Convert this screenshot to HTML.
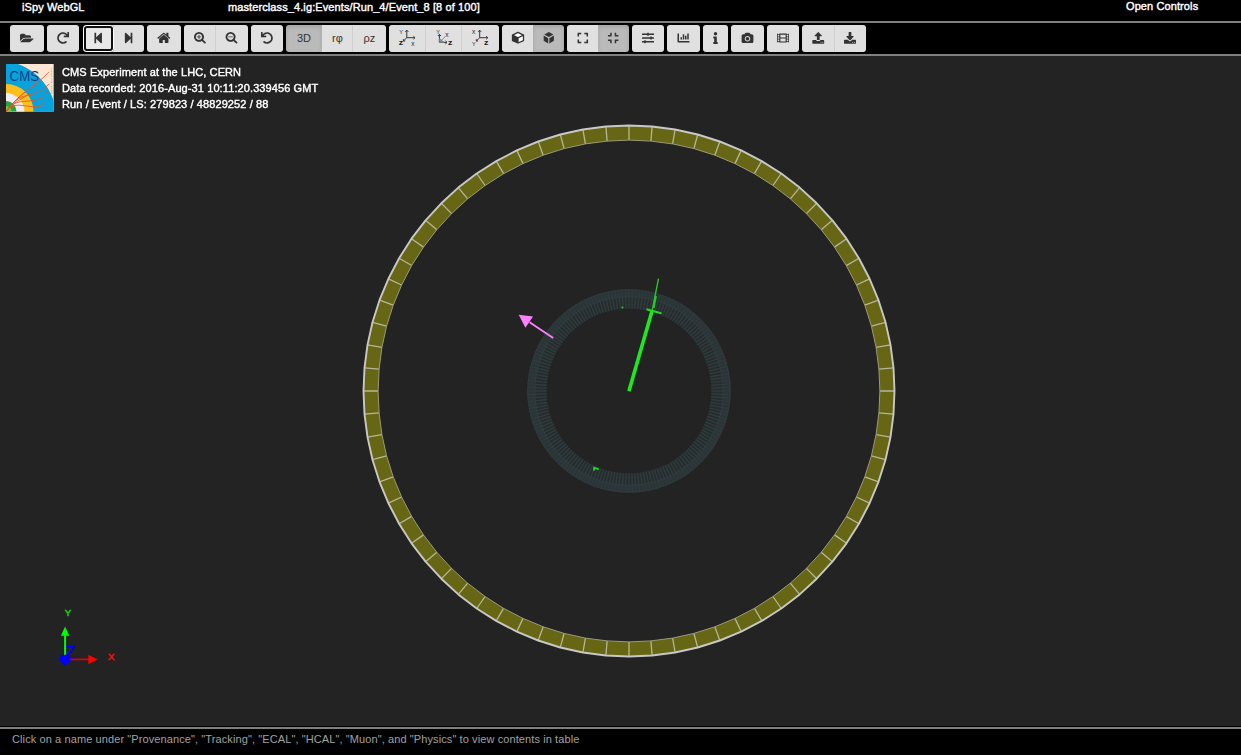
<!DOCTYPE html>
<html lang="en">
<head>
<meta charset="utf-8">
<title>iSpy WebGL</title>
<style>
html,body{margin:0;padding:0;background:#232323;overflow:hidden;}
body{width:1241px;height:755px;position:relative;font-family:"Liberation Sans",Arial,sans-serif;font-size:11px;color:#fff;letter-spacing:0.1px;-webkit-text-stroke:0.4px currentColor;}
#titlebar{position:absolute;left:0;top:0;width:1241px;height:21px;background:#000;}
#titlebar span{position:absolute;top:1px;line-height:13px;white-space:nowrap;}
#line1{position:absolute;left:0;top:21px;width:1241px;height:2px;background:#808080;}
#toolbar{position:absolute;left:0;top:23px;width:1241px;height:31px;background:#000;}
#line2{position:absolute;left:0;top:54px;width:1241px;height:2px;background:#808080;}
.b{position:absolute;top:2px;height:27px;background:#e0e0e0;border-radius:3px;box-sizing:border-box;color:#333;}
.b.l{border-radius:3px 0 0 3px;}
.b.m{border-radius:0;}
.b.r{border-radius:0 3px 3px 0;}
.b.sep{border-left:1px solid #cfcfcf;}
.b.foc{background:#e8e8e8;border-radius:4px;box-shadow:inset 0 0 0 1px #fff,inset 0 0 0 3px #101010;}
.b.act{background:#bababa;box-shadow:inset 0 2px 4px rgba(0,0,0,.12);}
#icons{position:absolute;left:0;top:0;}
.b .t{position:absolute;left:0;right:0;top:0;line-height:26px;text-align:center;font-size:11px;color:#333;-webkit-text-stroke:0;letter-spacing:0;}
#info{will-change:transform;position:absolute;left:62px;top:64px;line-height:16px;font-size:11px;color:#fff;white-space:nowrap;}
#logo{position:absolute;left:6px;top:64px;width:48px;height:48px;}
#scene{position:absolute;left:0;top:56px;}
#line3{position:absolute;left:0;top:727px;width:1241px;height:2px;background:#808080;}
#footer{position:absolute;left:0;top:726px;width:1241px;height:29px;background:#000;color:#a0a0a0;-webkit-text-stroke:0;}
#footer span{position:absolute;left:12px;top:7px;line-height:13px;white-space:nowrap;}
</style>
</head>
<body>
<div id="titlebar">
<span style="left:22px">iSpy WebGL</span>
<span style="left:228px">masterclass_4.ig:Events/Run_4/Event_8 [8 of 100]</span>
<span style="left:1126px;top:0">Open Controls</span>
</div>
<div id="line1"></div>
<div id="toolbar">
<div class="b" style="left:10px;width:34px"></div>
<div class="b" style="left:47px;width:32px"></div>
<div class="b r" style="left:109px;width:35px"></div>
<div class="b l foc" style="left:83px;width:31px"></div>
<div class="b" style="left:147px;width:34px"></div>
<div class="b l" style="left:184px;width:32px"></div>
<div class="b r sep" style="left:215px;width:33px"></div>
<div class="b" style="left:251px;width:32px"></div>
<div class="b l act" style="left:286px;width:36px"><span class="t">3D</span></div>
<div class="b m" style="left:322px;width:31px"><span class="t">rφ</span></div>
<div class="b r sep" style="left:352px;width:34px"><span class="t">ρz</span></div>
<div class="b l" style="left:389px;width:37px"></div>
<div class="b m sep" style="left:425px;width:37px"></div>
<div class="b r sep" style="left:461px;width:38px"></div>
<div class="b l" style="left:502px;width:31px"></div>
<div class="b r act" style="left:533px;width:31px"></div>
<div class="b l" style="left:567px;width:31px"></div>
<div class="b r act" style="left:598px;width:31px"></div>
<div class="b" style="left:632px;width:32px"></div>
<div class="b" style="left:667px;width:33px"></div>
<div class="b" style="left:703px;width:25px"></div>
<div class="b" style="left:731px;width:33px"></div>
<div class="b" style="left:767px;width:32px"></div>
<div class="b l" style="left:802px;width:33px"></div>
<div class="b r sep" style="left:834px;width:32px"></div>
<svg id="icons" width="1241" height="31" viewBox="0 23 1241 31" fill="#333">
<path transform="matrix(0.007185 0 0 -0.006037 20.000 42.300)" d="M1879 584Q1879 553 1848 518L1512 122Q1469 71 1391.5 35.5Q1314 0 1248 0H160Q126 0 99.5 13.0Q73 26 73 56Q73 87 104 122L440 518Q483 569 560.5 604.5Q638 640 704 640H1792Q1826 640 1852.5 627.0Q1879 614 1879 584ZM1536 928V768H704Q610 768 507.0 720.5Q404 673 343 601L6 205L1 199Q1 203 0.5 211.5Q0 220 0 224V1184Q0 1276 66.0 1342.0Q132 1408 224 1408H544Q636 1408 702.0 1342.0Q768 1276 768 1184V1152H1312Q1404 1152 1470.0 1086.0Q1536 1020 1536 928Z"/>
<path transform="matrix(0.023438 0 0 0.023438 57.000 32)" d="M500.33 0h-47.41a12 12 0 0 0-12 12.57l4 82.76A247.42 247.42 0 0 0 256 8C119.34 8 7.9 119.53 8 256.19 8.1 393.07 119.1 504 256 504a247.1 247.1 0 0 0 166.18-63.91 12 12 0 0 0 .48-17.43l-34-34a12 12 0 0 0-16.38-.55A176 176 0 1 1 402.1 157.8l-101.53-4.87a12 12 0 0 0-12.57 12v47.41a12 12 0 0 0 12 12h200.33a12 12 0 0 0 12-12V12a12 12 0 0 0-12-12z"/>
<path transform="matrix(0.023438 0 0 0.023438 92.950 32)" d="M64 468V44c0-6.600 5.400-12 12-12h48c6.600 0 12 5.400 12 12v176.400l195.500-181C352.100 22.300 384 36.600 384 64v384c0 27.400-31.900 41.700-52.500 24.600L136 292.700V468c0 6.600-5.400 12-12 12H76c-6.600 0-12-5.400-12-12z"/>
<path transform="matrix(-0.023438 0 0 0.023438 133.850 32)" d="M64 468V44c0-6.600 5.400-12 12-12h48c6.600 0 12 5.400 12 12v176.400l195.500-181C352.100 22.300 384 36.600 384 64v384c0 27.400-31.900 41.700-52.500 24.600L136 292.700V468c0 6.600-5.400 12-12 12H76c-6.600 0-12-5.400-12-12z"/>
<path transform="matrix(0.008063 0 0 -0.007989 157.091 43.000)" d="M1408 544V64Q1408 38 1389.0 19.0Q1370 0 1344 0H960V384H704V0H320Q294 0 275.0 19.0Q256 38 256 64V544Q256 545 256.5 547.0Q257 549 257 550L832 1024L1407 550Q1408 548 1408 544ZM1631 613 1569 539Q1561 530 1548 528H1545Q1532 528 1524 535L832 1112L140 535Q128 527 116 528Q103 530 95 539L33 613Q25 623 26.0 636.5Q27 650 37 658L756 1257Q788 1283 832.0 1283.0Q876 1283 908 1257L1152 1053V1248Q1152 1262 1161.0 1271.0Q1170 1280 1184 1280H1376Q1390 1280 1399.0 1271.0Q1408 1262 1408 1248V840L1627 658Q1637 650 1638.0 636.5Q1639 623 1631 613Z"/>
<path transform="matrix(0.007091 0 0 -0.006971 194.000 41.815)" d="M1024 736V672Q1024 659 1014.5 649.5Q1005 640 992 640H768V416Q768 403 758.5 393.5Q749 384 736 384H672Q659 384 649.5 393.5Q640 403 640 416V640H416Q403 640 393.5 649.5Q384 659 384 672V736Q384 749 393.5 758.5Q403 768 416 768H640V992Q640 1005 649.5 1014.5Q659 1024 672 1024H736Q749 1024 758.5 1014.5Q768 1005 768 992V768H992Q1005 768 1014.5 758.5Q1024 749 1024 736ZM1020.5 387.5Q1152 519 1152.0 704.0Q1152 889 1020.5 1020.5Q889 1152 704.0 1152.0Q519 1152 387.5 1020.5Q256 889 256.0 704.0Q256 519 387.5 387.5Q519 256 704.0 256.0Q889 256 1020.5 387.5ZM1536 -256Q1482 -256 1446 -218L1103 124Q924 0 704 0Q561 0 430.5 55.5Q300 111 205.5 205.5Q111 300 55.5 430.5Q0 561 0.0 704.0Q0 847 55.5 977.5Q111 1108 205.5 1202.5Q300 1297 430.5 1352.5Q561 1408 704.0 1408.0Q847 1408 977.5 1352.5Q1108 1297 1202.5 1202.5Q1297 1108 1352.5 977.5Q1408 847 1408 704Q1408 484 1284 305L1627 -38Q1664 -75 1664.0 -128.0Q1664 -181 1626.5 -218.5Q1589 -256 1536 -256Z"/>
<path transform="matrix(0.007091 0 0 -0.006971 225.600 41.815)" d="M1024 736V672Q1024 659 1014.5 649.5Q1005 640 992 640H416Q403 640 393.5 649.5Q384 659 384 672V736Q384 749 393.5 758.5Q403 768 416 768H992Q1005 768 1014.5 758.5Q1024 749 1024 736ZM1020.5 387.5Q1152 519 1152.0 704.0Q1152 889 1020.5 1020.5Q889 1152 704.0 1152.0Q519 1152 387.5 1020.5Q256 889 256.0 704.0Q256 519 387.5 387.5Q519 256 704.0 256.0Q889 256 1020.5 387.5ZM1536 -256Q1482 -256 1446 -218L1103 124Q924 0 704 0Q561 0 430.5 55.5Q300 111 205.5 205.5Q111 300 55.5 430.5Q0 561 0.0 704.0Q0 847 55.5 977.5Q111 1108 205.5 1202.5Q300 1297 430.5 1352.5Q561 1408 704.0 1408.0Q847 1408 977.5 1352.5Q1108 1297 1202.5 1202.5Q1297 1108 1352.5 977.5Q1408 847 1408 704Q1408 484 1284 305L1627 -38Q1664 -75 1664.0 -128.0Q1664 -181 1626.5 -218.5Q1589 -256 1536 -256Z"/>
<path transform="matrix(-0.023438 0 0 0.023438 273.000 32)" d="M500.33 0h-47.41a12 12 0 0 0-12 12.57l4 82.76A247.42 247.42 0 0 0 256 8C119.34 8 7.9 119.53 8 256.19 8.1 393.07 119.1 504 256 504a247.1 247.1 0 0 0 166.18-63.91 12 12 0 0 0 .48-17.43l-34-34a12 12 0 0 0-16.38-.55A176 176 0 1 1 402.1 157.8l-101.53-4.87a12 12 0 0 0-12.57 12v47.41a12 12 0 0 0 12 12h200.33a12 12 0 0 0 12-12V12a12 12 0 0 0-12-12z"/>
<path transform="matrix(0.023438 0 0 0.023438 577.550 32)" d="M0 180V56c0-13.300 10.700-24 24-24h124c6.600 0 12 5.400 12 12v40c0 6.600-5.400 12-12 12H64v84c0 6.600-5.400 12-12 12H12c-6.600 0-12-5.400-12-12zM288 44v40c0 6.600 5.400 12 12 12h84v84c0 6.600 5.400 12 12 12h40c6.600 0 12-5.400 12-12V56c0-13.300-10.700-24-24-24H300c-6.600 0-12 5.400-12 12zm148 276h-40c-6.600 0-12 5.400-12 12v84h-84c-6.600 0-12 5.400-12 12v40c0 6.600 5.400 12 12 12h124c13.300 0 24-10.700 24-24V332c0-6.600-5.400-12-12-12zM160 468v-40c0-6.600-5.400-12-12-12H64v-84c0-6.600-5.400-12-12-12H12c-6.600 0-12 5.400-12 12v124c0 13.300 10.700 24 24 24h124c6.600 0 12-5.400 12-12z"/>
<path transform="matrix(0.023438 0 0 0.023438 607.950 32)" d="M436 192H312c-13.300 0-24-10.700-24-24V44c0-6.600 5.400-12 12-12h40c6.600 0 12 5.400 12 12v84h84c6.600 0 12 5.400 12 12v40c0 6.600-5.400 12-12 12zm-276-24V44c0-6.600-5.400-12-12-12h-40c-6.600 0-12 5.400-12 12v84H12c-6.600 0-12 5.400-12 12v40c0 6.600 5.400 12 12 12h124c13.300 0 24-10.700 24-24zm0 300V344c0-13.300-10.700-24-24-24H12c-6.600 0-12 5.400-12 12v40c0 6.600 5.400 12 12 12h84v84c0 6.600 5.400 12 12 12h40c6.600 0 12-5.400 12-12zm192 0v-84h84c6.600 0 12-5.400 12-12v-40c0-6.600-5.400-12-12-12H312c-13.300 0-24 10.700-24 24v124c0 6.600 5.400 12 12 12h40c6.600 0 12-5.400 12-12z"/>
<path transform="matrix(0.023438 0 0 0.023438 642.000 32)" d="M496 384H160v-16c0-8.800-7.200-16-16-16h-32c-8.800 0-16 7.200-16 16v16H16c-8.800 0-16 7.200-16 16v32c0 8.800 7.200 16 16 16h80v16c0 8.800 7.200 16 16 16h32c8.800 0 16-7.200 16-16v-16h336c8.800 0 16-7.200 16-16v-32c0-8.800-7.200-16-16-16zm0-160h-80v-16c0-8.800-7.200-16-16-16h-32c-8.800 0-16 7.200-16 16v16H16c-8.800 0-16 7.200-16 16v32c0 8.800 7.200 16 16 16h336v16c0 8.800 7.200 16 16 16h32c8.800 0 16-7.200 16-16v-16h80c8.800 0 16-7.200 16-16v-32c0-8.800-7.200-16-16-16zm0-160H288V48c0-8.800-7.200-16-16-16h-32c-8.800 0-16 7.200-16 16v16H16C7.200 64 0 71.200 0 80v32c0 8.800 7.200 16 16 16h208v16c0 8.800 7.200 16 16 16h32c8.800 0 16-7.200 16-16v-16h208c8.800 0 16-7.200 16-16V80c0-8.800-7.200-16-16-16z"/>
<path transform="matrix(0.023438 0 0 0.023438 677.500 32)" d="M332.8 320h38.4c6.400 0 12.800-6.400 12.800-12.800V172.800c0-6.400-6.400-12.800-12.800-12.800h-38.400c-6.400 0-12.800 6.400-12.800 12.800v134.400c0 6.400 6.400 12.800 12.800 12.800zm96 0h38.400c6.400 0 12.800-6.400 12.800-12.800V76.800c0-6.400-6.400-12.800-12.800-12.800h-38.400c-6.400 0-12.800 6.400-12.800 12.800v230.400c0 6.400 6.400 12.800 12.800 12.800zm-288 0h38.400c6.400 0 12.800-6.400 12.800-12.800v-70.400c0-6.400-6.400-12.800-12.800-12.800h-38.400c-6.400 0-12.800 6.400-12.800 12.800v70.400c0 6.400 6.400 12.800 12.800 12.800zm96 0h38.400c6.400 0 12.800-6.400 12.800-12.800V108.800c0-6.400-6.400-12.800-12.800-12.800h-38.400c-6.400 0-12.800 6.400-12.800 12.800v198.400c0 6.400 6.400 12.800 12.800 12.800zM496 384H64V80c0-8.840-7.160-16-16-16H16C7.160 64 0 71.160 0 80v336c0 17.670 14.330 32 32 32h464c8.840 0 16-7.160 16-16v-32c0-8.840-7.160-16-16-16z"/>
<path transform="matrix(0.023438 0 0 0.023438 713.250 32)" d="M20 424.229h20V279.771H20c-11.046 0-20-8.954-20-20V212c0-11.046 8.954-20 20-20h112c11.046 0 20 8.954 20 20v212.229h20c11.046 0 20 8.954 20 20V492c0 11.046-8.954 20-20 20H20c-11.046 0-20-8.954-20-20v-47.771c0-11.046 8.954-20 20-20zM96 0C56.235 0 24 32.235 24 72s32.235 72 72 72 72-32.235 72-72S135.764 0 96 0z"/>
<path transform="matrix(0.006146 0 0 -0.006220 741.600 42.304)" d="M756.5 779.5Q841 864 960.0 864.0Q1079 864 1163.5 779.5Q1248 695 1248.0 576.0Q1248 457 1163.5 372.5Q1079 288 960.0 288.0Q841 288 756.5 372.5Q672 457 672.0 576.0Q672 695 756.5 779.5ZM1664 1280Q1770 1280 1845.0 1205.0Q1920 1130 1920 1024V128Q1920 22 1845.0 -53.0Q1770 -128 1664 -128H256Q150 -128 75.0 -53.0Q0 22 0 128V1024Q0 1130 75.0 1205.0Q150 1280 256 1280H480L531 1416Q550 1465 600.5 1500.5Q651 1536 704 1536H1216Q1269 1536 1319.5 1500.5Q1370 1465 1389 1416L1440 1280ZM643.5 259.5Q775 128 960.0 128.0Q1145 128 1276.5 259.5Q1408 391 1408.0 576.0Q1408 761 1276.5 892.5Q1145 1024 960.0 1024.0Q775 1024 643.5 892.5Q512 761 512.0 576.0Q512 391 643.5 259.5Z"/>
<path transform="matrix(0.023438 0 0 0.023438 777.000 32)" d="M488 64h-8v20c0 6.600-5.400 12-12 12h-40c-6.600 0-12-5.400-12-12V64H96v20c0 6.600-5.400 12-12 12H44c-6.600 0-12-5.400-12-12V64h-8C10.700 64 0 74.700 0 88v336c0 13.300 10.700 24 24 24h8v-20c0-6.600 5.400-12 12-12h40c6.600 0 12 5.400 12 12v20h320v-20c0-6.600 5.400-12 12-12h40c6.600 0 12 5.400 12 12v20h8c13.300 0 24-10.700 24-24V88c0-13.300-10.700-24-24-24zM96 372c0 6.600-5.400 12-12 12H44c-6.600 0-12-5.400-12-12v-40c0-6.600 5.400-12 12-12h40c6.600 0 12 5.400 12 12v40zm0-96c0 6.600-5.400 12-12 12H44c-6.600 0-12-5.400-12-12v-40c0-6.600 5.400-12 12-12h40c6.600 0 12 5.400 12 12v40zm0-96c0 6.600-5.400 12-12 12H44c-6.600 0-12-5.400-12-12v-40c0-6.600 5.400-12 12-12h40c6.600 0 12 5.400 12 12v40zm272 208c0 6.600-5.400 12-12 12H156c-6.600 0-12-5.400-12-12v-96c0-6.600 5.400-12 12-12h200c6.600 0 12 5.400 12 12v96zm0-168c0 6.600-5.400 12-12 12H156c-6.600 0-12-5.400-12-12v-96c0-6.600 5.400-12 12-12h200c6.600 0 12 5.400 12 12v96zm112 152c0 6.600-5.400 12-12 12h-40c-6.600 0-12-5.400-12-12v-40c0-6.600 5.400-12 12-12h40c6.600 0 12 5.400 12 12v40zm0-96c0 6.600-5.400 12-12 12h-40c-6.600 0-12-5.400-12-12v-40c0-6.600 5.400-12 12-12h40c6.600 0 12 5.400 12 12v40zm0-96c0 6.600-5.400 12-12 12h-40c-6.600 0-12-5.400-12-12v-40c0-6.600 5.400-12 12-12h40c6.600 0 12 5.400 12 12v40z"/>
<path transform="matrix(0.007151 0 0 -0.007375 812.300 42.856)" d="M1261.0 19.0Q1280 38 1280.0 64.0Q1280 90 1261.0 109.0Q1242 128 1216.0 128.0Q1190 128 1171.0 109.0Q1152 90 1152.0 64.0Q1152 38 1171.0 19.0Q1190 0 1216.0 0.0Q1242 0 1261.0 19.0ZM1517.0 19.0Q1536 38 1536.0 64.0Q1536 90 1517.0 109.0Q1498 128 1472.0 128.0Q1446 128 1427.0 109.0Q1408 90 1408.0 64.0Q1408 38 1427.0 19.0Q1446 0 1472.0 0.0Q1498 0 1517.0 19.0ZM1664 288V-32Q1664 -72 1636.0 -100.0Q1608 -128 1568 -128H96Q56 -128 28.0 -100.0Q0 -72 0 -32V288Q0 328 28.0 356.0Q56 384 96 384H523Q544 328 593.5 292.0Q643 256 704 256H960Q1021 256 1070.5 292.0Q1120 328 1141 384H1568Q1608 384 1636.0 356.0Q1664 328 1664 288ZM1339 936Q1322 896 1280 896H1024V448Q1024 422 1005.0 403.0Q986 384 960 384H704Q678 384 659.0 403.0Q640 422 640 448V896H384Q342 896 325 936Q308 975 339 1005L787 1453Q805 1472 832.0 1472.0Q859 1472 877 1453L1325 1005Q1356 975 1339 936Z"/>
<path transform="matrix(0.007212 0 0 -0.007682 844.000 43.800)" d="M1261.0 147.0Q1280 166 1280.0 192.0Q1280 218 1261.0 237.0Q1242 256 1216.0 256.0Q1190 256 1171.0 237.0Q1152 218 1152.0 192.0Q1152 166 1171.0 147.0Q1190 128 1216.0 128.0Q1242 128 1261.0 147.0ZM1517.0 147.0Q1536 166 1536.0 192.0Q1536 218 1517.0 237.0Q1498 256 1472.0 256.0Q1446 256 1427.0 237.0Q1408 218 1408.0 192.0Q1408 166 1427.0 147.0Q1446 128 1472.0 128.0Q1498 128 1517.0 147.0ZM1664 416V96Q1664 56 1636.0 28.0Q1608 0 1568 0H96Q56 0 28.0 28.0Q0 56 0 96V416Q0 456 28.0 484.0Q56 512 96 512H561L696 376Q754 320 832.0 320.0Q910 320 968 376L1104 512H1568Q1608 512 1636.0 484.0Q1664 456 1664 416ZM1339 985Q1356 944 1325 915L877 467Q859 448 832.0 448.0Q805 448 787 467L339 915Q308 944 325 985Q342 1024 384 1024H640V1472Q640 1498 659.0 1517.0Q678 1536 704 1536H960Q986 1536 1005.0 1517.0Q1024 1498 1024 1472V1024H1280Q1322 1024 1339 985Z"/>
<path d="M518.0 32.4L523.5 35.1L523.5 40.6L518.0 43L512.5 40.6L512.5 35.1Z" fill="#fff" stroke="#333" stroke-width="1.3" stroke-linejoin="round"/>
<path d="M512.5 35.1L518.0 37.8L518.0 43L512.5 40.6Z" fill="#333"/>
<path d="M512.5 35.1L518.0 37.8L523.5 35.1M518.0 37.8L518.0 43" fill="none" stroke="#333" stroke-width="1.2"/>
<path d="M548.8 31.9L553.3 34.5L548.8 37.1L544.3 34.5Z"/>
<path d="M543.6999999999999 35.6L548.1999999999999 38.2L548.1999999999999 43.4L543.6999999999999 40.8Z"/>
<path d="M553.9 35.6L549.4 38.2L549.4 43.4L553.9 40.8Z"/>
<path d="M406.8 37.7L406.8 30.2M405.3 31.8L406.8 30.2L408.3 31.8M406.8 37.7L415 37.7M413.4 36.2L415 37.7L413.4 39.2M406.8 37.7L403.4 41M403.4 39.2L403.4 41L405.2 41" fill="none" stroke="#333" stroke-width="1"/>
<text x="401.1" y="33.8" text-anchor="middle" font-family="Liberation Sans, sans-serif" font-size="5.5" fill="#2a2a2a">Y</text>
<text transform="translate(401.1 45.4) scale(1.35 1)" text-anchor="middle" font-family="Liberation Sans, sans-serif" font-size="6.5" font-weight="bold" fill="#222">z</text>
<text x="413" y="45.5" text-anchor="middle" font-family="Liberation Sans, sans-serif" font-size="6.5" fill="#2a2a2a">x</text>
<path d="M439.4 34.4L439.4 42.4L447 42.4M437.9 36L439.4 34.4L440.9 36M445.4 40.9L447 42.4L445.4 43.9" fill="none" stroke="#333" stroke-width="1"/>
<path d="M439.4 42.4L445 36.8M439.4 38.5L444 42.4L439.4 42.4Z" fill="#999" stroke="#777" stroke-width="0.8"/>
<text x="438.1" y="33.8" text-anchor="middle" font-family="Liberation Sans, sans-serif" font-size="5.5" fill="#2a2a2a">Y</text>
<text x="447" y="36.8" text-anchor="middle" font-family="Liberation Sans, sans-serif" font-size="6.5" fill="#2a2a2a">x</text>
<text transform="translate(450.3 45.4) scale(1.35 1)" text-anchor="middle" font-family="Liberation Sans, sans-serif" font-size="6.5" font-weight="bold" fill="#222">z</text>
<path d="M479.7 37.7L479.7 30.2M478.2 31.8L479.7 30.2L481.2 31.8M479.7 37.7L487.8 37.7M486.2 36.2L487.8 37.7L486.2 39.2M479.7 37.7L476.3 41M476.3 39.2L476.3 41L478.1 41" fill="none" stroke="#333" stroke-width="1"/>
<text x="473.8" y="33.8" text-anchor="middle" font-family="Liberation Sans, sans-serif" font-size="6.5" fill="#2a2a2a">x</text>
<text x="473.8" y="45.8" text-anchor="middle" font-family="Liberation Sans, sans-serif" font-size="5.5" fill="#2a2a2a">Y</text>
<text transform="translate(486.2 45.4) scale(1.35 1)" text-anchor="middle" font-family="Liberation Sans, sans-serif" font-size="6.5" font-weight="bold" fill="#222">z</text>
</svg>
</div>
<div id="line2"></div>
<svg id="scene" width="1241" height="671" viewBox="0 56 1241 671">
<path d="M629 125.5 L605.9 126.5 L582.9 129.5 L560.3 134.5 L538.2 141.5 L516.8 150.4 L496.3 161.1 L476.7 173.5 L458.3 187.6 L441.3 203.3 L425.6 220.3 L411.5 238.7 L399.1 258.2 L388.4 278.8 L379.5 300.2 L372.5 322.3 L367.5 344.9 L364.5 367.9 L363.5 391 L364.5 414.1 L367.5 437.1 L372.5 459.7 L379.5 481.8 L388.4 503.2 L399.1 523.7 L411.5 543.3 L425.6 561.7 L441.3 578.7 L458.3 594.4 L476.7 608.5 L496.2 620.9 L516.8 631.6 L538.2 640.5 L560.3 647.5 L582.9 652.5 L605.9 655.5 L629 656.5 L652.1 655.5 L675.1 652.5 L697.7 647.5 L719.8 640.5 L741.2 631.6 L761.8 620.9 L781.3 608.5 L799.7 594.4 L816.7 578.7 L832.4 561.7 L846.5 543.3 L858.9 523.8 L869.6 503.2 L878.5 481.8 L885.5 459.7 L890.5 437.1 L893.5 414.1 L894.5 391 L893.5 367.9 L890.5 344.9 L885.5 322.3 L878.5 300.2 L869.6 278.8 L858.9 258.3 L846.5 238.7 L832.4 220.3 L816.7 203.3 L799.7 187.6 L781.3 173.5 L761.7 161.1 L741.2 150.4 L719.8 141.5 L697.7 134.5 L675.1 129.5 L652.1 126.5Z M629 140.1 L607.1 141.1 L585.4 143.9 L564.1 148.6 L543.2 155.2 L523 163.6 L503.6 173.7 L485.1 185.5 L467.7 198.8 L451.6 213.6 L436.8 229.7 L423.5 247.1 L411.7 265.5 L401.6 285 L393.2 305.2 L386.6 326.1 L381.9 347.4 L379.1 369.1 L378.1 391 L379.1 412.9 L381.9 434.6 L386.6 455.9 L393.2 476.8 L401.6 497 L411.7 516.4 L423.5 534.9 L436.8 552.3 L451.6 568.4 L467.7 583.2 L485.1 596.5 L503.5 608.3 L523 618.4 L543.2 626.8 L564.1 633.4 L585.4 638.1 L607.1 640.9 L629 641.9 L650.9 640.9 L672.6 638.1 L693.9 633.4 L714.8 626.8 L735 618.4 L754.5 608.3 L772.9 596.5 L790.3 583.2 L806.4 568.4 L821.2 552.3 L834.5 534.9 L846.3 516.5 L856.4 497 L864.8 476.8 L871.4 455.9 L876.1 434.6 L878.9 412.9 L879.9 391 L878.9 369.1 L876.1 347.4 L871.4 326.1 L864.8 305.2 L856.4 285 L846.3 265.6 L834.5 247.1 L821.2 229.7 L806.4 213.6 L790.3 198.8 L772.9 185.5 L754.4 173.7 L735 163.6 L714.8 155.2 L693.9 148.6 L672.6 143.9 L650.9 141.1Z" fill="#666614" fill-rule="evenodd"/>
<path d="M629 140.1L629 125.5M607.1 141.1L605.9 126.5M585.4 143.9L582.9 129.5M564.1 148.6L560.3 134.5M543.2 155.2L538.2 141.5M523 163.6L516.8 150.4M503.6 173.7L496.3 161.1M485.1 185.5L476.7 173.5M467.7 198.8L458.3 187.6M451.6 213.6L441.3 203.3M436.8 229.7L425.6 220.3M423.5 247.1L411.5 238.7M411.7 265.5L399.1 258.2M401.6 285L388.4 278.8M393.2 305.2L379.5 300.2M386.6 326.1L372.5 322.3M381.9 347.4L367.5 344.9M379.1 369.1L364.5 367.9M378.1 391L363.5 391M379.1 412.9L364.5 414.1M381.9 434.6L367.5 437.1M386.6 455.9L372.5 459.7M393.2 476.8L379.5 481.8M401.6 497L388.4 503.2M411.7 516.4L399.1 523.7M423.5 534.9L411.5 543.3M436.8 552.3L425.6 561.7M451.6 568.4L441.3 578.7M467.7 583.2L458.3 594.4M485.1 596.5L476.7 608.5M503.5 608.3L496.2 620.9M523 618.4L516.8 631.6M543.2 626.8L538.2 640.5M564.1 633.4L560.3 647.5M585.4 638.1L582.9 652.5M607.1 640.9L605.9 655.5M629 641.9L629 656.5M650.9 640.9L652.1 655.5M672.6 638.1L675.1 652.5M693.9 633.4L697.7 647.5M714.8 626.8L719.8 640.5M735 618.4L741.2 631.6M754.5 608.3L761.8 620.9M772.9 596.5L781.3 608.5M790.3 583.2L799.7 594.4M806.4 568.4L816.7 578.7M821.2 552.3L832.4 561.7M834.5 534.9L846.5 543.3M846.3 516.5L858.9 523.8M856.4 497L869.6 503.2M864.8 476.8L878.5 481.8M871.4 455.9L885.5 459.7M876.1 434.6L890.5 437.1M878.9 412.9L893.5 414.1M879.9 391L894.5 391M878.9 369.1L893.5 367.9M876.1 347.4L890.5 344.9M871.4 326.1L885.5 322.3M864.8 305.2L878.5 300.2M856.4 285L869.6 278.8M846.3 265.6L858.9 258.3M834.5 247.1L846.5 238.7M821.2 229.7L832.4 220.3M806.4 213.6L816.7 203.3M790.3 198.8L799.7 187.6M772.9 185.5L781.3 173.5M754.4 173.7L761.7 161.1M735 163.6L741.2 150.4M714.8 155.2L719.8 141.5M693.9 148.6L697.7 134.5M672.6 143.9L675.1 129.5M650.9 141.1L652.1 126.5" stroke="#b6b69a" stroke-width="1.3" fill="none"/>
<path d="M629 140.1 L607.1 141.1 L585.4 143.9 L564.1 148.6 L543.2 155.2 L523 163.6 L503.6 173.7 L485.1 185.5 L467.7 198.8 L451.6 213.6 L436.8 229.7 L423.5 247.1 L411.7 265.5 L401.6 285 L393.2 305.2 L386.6 326.1 L381.9 347.4 L379.1 369.1 L378.1 391 L379.1 412.9 L381.9 434.6 L386.6 455.9 L393.2 476.8 L401.6 497 L411.7 516.4 L423.5 534.9 L436.8 552.3 L451.6 568.4 L467.7 583.2 L485.1 596.5 L503.5 608.3 L523 618.4 L543.2 626.8 L564.1 633.4 L585.4 638.1 L607.1 640.9 L629 641.9 L650.9 640.9 L672.6 638.1 L693.9 633.4 L714.8 626.8 L735 618.4 L754.5 608.3 L772.9 596.5 L790.3 583.2 L806.4 568.4 L821.2 552.3 L834.5 534.9 L846.3 516.5 L856.4 497 L864.8 476.8 L871.4 455.9 L876.1 434.6 L878.9 412.9 L879.9 391 L878.9 369.1 L876.1 347.4 L871.4 326.1 L864.8 305.2 L856.4 285 L846.3 265.6 L834.5 247.1 L821.2 229.7 L806.4 213.6 L790.3 198.8 L772.9 185.5 L754.4 173.7 L735 163.6 L714.8 155.2 L693.9 148.6 L672.6 143.9 L650.9 141.1Z" stroke="#9a9a78" stroke-width="1" fill="none"/>
<path d="M629 125.5 L605.9 126.5 L582.9 129.5 L560.3 134.5 L538.2 141.5 L516.8 150.4 L496.3 161.1 L476.7 173.5 L458.3 187.6 L441.3 203.3 L425.6 220.3 L411.5 238.7 L399.1 258.2 L388.4 278.8 L379.5 300.2 L372.5 322.3 L367.5 344.9 L364.5 367.9 L363.5 391 L364.5 414.1 L367.5 437.1 L372.5 459.7 L379.5 481.8 L388.4 503.2 L399.1 523.7 L411.5 543.3 L425.6 561.7 L441.3 578.7 L458.3 594.4 L476.7 608.5 L496.2 620.9 L516.8 631.6 L538.2 640.5 L560.3 647.5 L582.9 652.5 L605.9 655.5 L629 656.5 L652.1 655.5 L675.1 652.5 L697.7 647.5 L719.8 640.5 L741.2 631.6 L761.8 620.9 L781.3 608.5 L799.7 594.4 L816.7 578.7 L832.4 561.7 L846.5 543.3 L858.9 523.8 L869.6 503.2 L878.5 481.8 L885.5 459.7 L890.5 437.1 L893.5 414.1 L894.5 391 L893.5 367.9 L890.5 344.9 L885.5 322.3 L878.5 300.2 L869.6 278.8 L858.9 258.3 L846.5 238.7 L832.4 220.3 L816.7 203.3 L799.7 187.6 L781.3 173.5 L761.7 161.1 L741.2 150.4 L719.8 141.5 L697.7 134.5 L675.1 129.5 L652.1 126.5Z" stroke="#c8c8c6" stroke-width="1.9" fill="none" stroke-linejoin="round"/>
<circle cx="629" cy="391" r="88.3" fill="none" stroke="#262c2d" stroke-width="11.9"/>
<circle cx="629" cy="391" r="98" fill="none" stroke="#2b3437" stroke-width="7.4"/>
<path d="M711.4 391L723.3 391M711.3 388.1L723.2 387.7M711.2 385.3L723.1 384.4M710.9 382.4L722.8 381.1M710.6 379.5L722.4 377.9M710.1 376.7L721.9 374.6M709.6 373.9L721.2 371.4M709 371.1L720.5 368.2M708.2 368.3L719.6 365M707.4 365.5L718.7 361.9M706.4 362.8L717.6 358.7M705.4 360.1L716.4 355.7M704.3 357.5L715.1 352.6M703.1 354.9L713.8 349.7M701.8 352.3L712.3 346.7M700.4 349.8L710.7 343.9M698.9 347.3L709 341M697.3 344.9L707.2 338.3M695.7 342.6L705.3 335.6M693.9 340.3L703.3 332.9M692.1 338L701.2 330.4M690.2 335.9L699.1 327.9M688.3 333.8L696.8 325.5M686.2 331.7L694.5 323.2M684.1 329.8L692.1 320.9M682 327.9L689.6 318.8M679.7 326.1L687.1 316.7M677.4 324.3L684.4 314.7M675.1 322.7L681.7 312.8M672.7 321.1L679 311M670.2 319.6L676.1 309.3M667.7 318.2L673.3 307.7M665.1 316.9L670.3 306.2M662.5 315.7L667.4 304.9M659.9 314.6L664.3 303.6M657.2 313.6L661.3 302.4M654.5 312.6L658.1 301.3M651.7 311.8L655 300.4M648.9 311L651.8 299.5M646.1 310.4L648.6 298.8M643.3 309.9L645.4 298.1M640.5 309.4L642.1 297.6M637.6 309.1L638.9 297.2M634.7 308.8L635.6 296.9M631.9 308.7L632.3 296.8M629 308.6L629 296.7M626.1 308.7L625.7 296.8M623.3 308.8L622.4 296.9M620.4 309.1L619.1 297.2M617.5 309.4L615.9 297.6M614.7 309.9L612.6 298.1M611.9 310.4L609.4 298.8M609.1 311L606.2 299.5M606.3 311.8L603 300.4M603.5 312.6L599.9 301.3M600.8 313.6L596.7 302.4M598.1 314.6L593.7 303.6M595.5 315.7L590.6 304.9M592.9 316.9L587.7 306.2M590.3 318.2L584.7 307.7M587.8 319.6L581.9 309.3M585.3 321.1L579 311M582.9 322.7L576.3 312.8M580.6 324.3L573.6 314.7M578.3 326.1L570.9 316.7M576 327.9L568.4 318.8M573.9 329.8L565.9 320.9M571.8 331.7L563.5 323.2M569.7 333.8L561.2 325.5M567.8 335.9L558.9 327.9M565.9 338L556.8 330.4M564.1 340.3L554.7 332.9M562.3 342.6L552.7 335.6M560.7 344.9L550.8 338.3M559.1 347.3L549 341M557.6 349.8L547.3 343.9M556.2 352.3L545.7 346.7M554.9 354.9L544.2 349.7M553.7 357.5L542.9 352.6M552.6 360.1L541.6 355.7M551.6 362.8L540.4 358.7M550.6 365.5L539.3 361.9M549.8 368.3L538.4 365M549 371.1L537.5 368.2M548.4 373.9L536.8 371.4M547.9 376.7L536.1 374.6M547.4 379.5L535.6 377.9M547.1 382.4L535.2 381.1M546.8 385.3L534.9 384.4M546.7 388.1L534.8 387.7M546.6 391L534.7 391M546.7 393.9L534.8 394.3M546.8 396.7L534.9 397.6M547.1 399.6L535.2 400.9M547.4 402.5L535.6 404.1M547.9 405.3L536.1 407.4M548.4 408.1L536.8 410.6M549 410.9L537.5 413.8M549.8 413.7L538.4 417M550.6 416.5L539.3 420.1M551.6 419.2L540.4 423.3M552.6 421.9L541.6 426.3M553.7 424.5L542.9 429.4M554.9 427.1L544.2 432.3M556.2 429.7L545.7 435.3M557.6 432.2L547.3 438.1M559.1 434.7L549 441M560.7 437.1L550.8 443.7M562.3 439.4L552.7 446.4M564.1 441.7L554.7 449.1M565.9 444L556.8 451.6M567.8 446.1L558.9 454.1M569.7 448.2L561.2 456.5M571.8 450.3L563.5 458.8M573.9 452.2L565.9 461.1M576 454.1L568.4 463.2M578.3 455.9L570.9 465.3M580.6 457.7L573.6 467.3M582.9 459.3L576.3 469.2M585.3 460.9L579 471M587.8 462.4L581.8 472.7M590.3 463.8L584.7 474.3M592.9 465.1L587.7 475.8M595.5 466.3L590.6 477.1M598.1 467.4L593.7 478.4M600.8 468.4L596.7 479.6M603.5 469.4L599.9 480.7M606.3 470.2L603 481.6M609.1 471L606.2 482.5M611.9 471.6L609.4 483.2M614.7 472.1L612.6 483.9M617.5 472.6L615.9 484.4M620.4 472.9L619.1 484.8M623.3 473.2L622.4 485.1M626.1 473.3L625.7 485.2M629 473.4L629 485.3M631.9 473.3L632.3 485.2M634.7 473.2L635.6 485.1M637.6 472.9L638.9 484.8M640.5 472.6L642.1 484.4M643.3 472.1L645.4 483.9M646.1 471.6L648.6 483.2M648.9 471L651.8 482.5M651.7 470.2L655 481.6M654.5 469.4L658.1 480.7M657.2 468.4L661.3 479.6M659.9 467.4L664.3 478.4M662.5 466.3L667.4 477.1M665.1 465.1L670.3 475.8M667.7 463.8L673.3 474.3M670.2 462.4L676.1 472.7M672.7 460.9L679 471M675.1 459.3L681.7 469.2M677.4 457.7L684.4 467.3M679.7 455.9L687.1 465.3M682 454.1L689.6 463.2M684.1 452.2L692.1 461.1M686.2 450.3L694.5 458.8M688.3 448.2L696.8 456.5M690.2 446.1L699.1 454.1M692.1 444L701.2 451.6M693.9 441.7L703.3 449.1M695.7 439.4L705.3 446.4M697.3 437.1L707.2 443.7M698.9 434.7L709 441M700.4 432.2L710.7 438.2M701.8 429.7L712.3 435.3M703.1 427.1L713.8 432.3M704.3 424.5L715.1 429.4M705.4 421.9L716.4 426.3M706.4 419.2L717.6 423.3M707.4 416.5L718.7 420.1M708.2 413.7L719.6 417M709 410.9L720.5 413.8M709.6 408.1L721.2 410.6M710.1 405.3L721.9 407.4M710.6 402.5L722.4 404.1M710.9 399.6L722.8 400.9M711.2 396.7L723.1 397.6M711.3 393.9L723.2 394.3" stroke="#303b3e" stroke-width="1.4" fill="none"/>
<path d="M723.3 391L730.7 391M723.2 387.7L730.6 387.5M723.1 384.4L730.5 383.9M722.8 381.1L730.1 380.4M722.4 377.9L729.7 376.8M721.9 374.6L729.2 373.3M721.2 371.4L728.5 369.9M720.5 368.2L727.7 366.4M719.6 365L726.8 363M718.7 361.9L725.7 359.6M717.6 358.7L724.6 356.2M716.4 355.7L723.3 352.9M715.1 352.6L721.9 349.6M713.8 349.7L720.4 346.4M712.3 346.7L718.8 343.3M710.7 343.9L717.1 340.1M709 341L715.2 337.1M707.2 338.3L713.3 334.1M705.3 335.6L711.3 331.2M703.3 332.9L709.1 328.4M701.2 330.4L706.9 325.6M699.1 327.9L704.6 322.9M696.8 325.5L702.2 320.4M694.5 323.2L699.6 317.8M692.1 320.9L697.1 315.4M689.6 318.8L694.4 313.1M687.1 316.7L691.6 310.9M684.4 314.7L688.8 308.7M681.7 312.8L685.9 306.7M679 311L682.9 304.8M676.1 309.3L679.9 302.9M673.3 307.7L676.7 301.2M670.3 306.2L673.6 299.6M667.4 304.9L670.4 298.1M664.3 303.6L667.1 296.7M661.3 302.4L663.8 295.4M658.1 301.3L660.4 294.3M655 300.4L657 293.2M651.8 299.5L653.6 292.3M648.6 298.8L650.1 291.5M645.4 298.1L646.7 290.8M642.1 297.6L643.2 290.3M638.9 297.2L639.6 289.9M635.6 296.9L636.1 289.5M632.3 296.8L632.5 289.4M629 296.7L629 289.3M625.7 296.8L625.5 289.4M622.4 296.9L621.9 289.5M619.1 297.2L618.4 289.9M615.9 297.6L614.8 290.3M612.6 298.1L611.3 290.8M609.4 298.8L607.9 291.5M606.2 299.5L604.4 292.3M603 300.4L601 293.2M599.9 301.3L597.6 294.3M596.7 302.4L594.2 295.4M593.7 303.6L590.9 296.7M590.6 304.9L587.6 298.1M587.7 306.2L584.4 299.6M584.7 307.7L581.3 301.2M581.9 309.3L578.1 302.9M579 311L575.1 304.8M576.3 312.8L572.1 306.7M573.6 314.7L569.2 308.7M570.9 316.7L566.4 310.9M568.4 318.8L563.6 313.1M565.9 320.9L560.9 315.4M563.5 323.2L558.4 317.8M561.2 325.5L555.8 320.4M558.9 327.9L553.4 322.9M556.8 330.4L551.1 325.6M554.7 332.9L548.9 328.4M552.7 335.6L546.7 331.2M550.8 338.3L544.7 334.1M549 341L542.8 337.1M547.3 343.9L540.9 340.1M545.7 346.7L539.2 343.3M544.2 349.7L537.6 346.4M542.9 352.6L536.1 349.6M541.6 355.7L534.7 352.9M540.4 358.7L533.4 356.2M539.3 361.9L532.3 359.6M538.4 365L531.2 363M537.5 368.2L530.3 366.4M536.8 371.4L529.5 369.9M536.1 374.6L528.8 373.3M535.6 377.9L528.3 376.8M535.2 381.1L527.9 380.4M534.9 384.4L527.5 383.9M534.8 387.7L527.4 387.5M534.7 391L527.3 391M534.8 394.3L527.4 394.5M534.9 397.6L527.5 398.1M535.2 400.9L527.9 401.6M535.6 404.1L528.3 405.2M536.1 407.4L528.8 408.7M536.8 410.6L529.5 412.1M537.5 413.8L530.3 415.6M538.4 417L531.2 419M539.3 420.1L532.3 422.4M540.4 423.3L533.4 425.8M541.6 426.3L534.7 429.1M542.9 429.4L536.1 432.4M544.2 432.3L537.6 435.6M545.7 435.3L539.2 438.7M547.3 438.1L540.9 441.9M549 441L542.8 444.9M550.8 443.7L544.7 447.9M552.7 446.4L546.7 450.8M554.7 449.1L548.9 453.6M556.8 451.6L551.1 456.4M558.9 454.1L553.4 459.1M561.2 456.5L555.8 461.6M563.5 458.8L558.4 464.2M565.9 461.1L560.9 466.6M568.4 463.2L563.6 468.9M570.9 465.3L566.4 471.1M573.6 467.3L569.2 473.3M576.3 469.2L572.1 475.3M579 471L575.1 477.2M581.8 472.7L578.1 479.1M584.7 474.3L581.3 480.8M587.7 475.8L584.4 482.4M590.6 477.1L587.6 483.9M593.7 478.4L590.9 485.3M596.7 479.6L594.2 486.6M599.9 480.7L597.6 487.7M603 481.6L601 488.8M606.2 482.5L604.4 489.7M609.4 483.2L607.9 490.5M612.6 483.9L611.3 491.2M615.9 484.4L614.8 491.7M619.1 484.8L618.4 492.1M622.4 485.1L621.9 492.5M625.7 485.2L625.5 492.6M629 485.3L629 492.7M632.3 485.2L632.5 492.6M635.6 485.1L636.1 492.5M638.9 484.8L639.6 492.1M642.1 484.4L643.2 491.7M645.4 483.9L646.7 491.2M648.6 483.2L650.1 490.5M651.8 482.5L653.6 489.7M655 481.6L657 488.8M658.1 480.7L660.4 487.7M661.3 479.6L663.8 486.6M664.3 478.4L667.1 485.3M667.4 477.1L670.4 483.9M670.3 475.8L673.6 482.4M673.3 474.3L676.7 480.8M676.1 472.7L679.9 479.1M679 471L682.9 477.2M681.7 469.2L685.9 475.3M684.4 467.3L688.8 473.3M687.1 465.3L691.6 471.1M689.6 463.2L694.4 468.9M692.1 461.1L697.1 466.6M694.5 458.8L699.6 464.2M696.8 456.5L702.2 461.6M699.1 454.1L704.6 459.1M701.2 451.6L706.9 456.4M703.3 449.1L709.1 453.6M705.3 446.4L711.3 450.8M707.2 443.7L713.3 447.9M709 441L715.2 444.9M710.7 438.2L717.1 441.9M712.3 435.3L718.8 438.7M713.8 432.3L720.4 435.6M715.1 429.4L721.9 432.4M716.4 426.3L723.3 429.1M717.6 423.3L724.6 425.8M718.7 420.1L725.7 422.4M719.6 417L726.8 419M720.5 413.8L727.7 415.6M721.2 410.6L728.5 412.1M721.9 407.4L729.2 408.7M722.4 404.1L729.7 405.2M722.8 400.9L730.1 401.6M723.1 397.6L730.5 398.1M723.2 394.3L730.6 394.5" stroke="#2f3a3d" stroke-width="1.2" fill="none"/>
<circle cx="629" cy="391" r="94.3" fill="none" stroke="#313e41" stroke-width="1"/>
<circle cx="629" cy="391" r="101.2" fill="none" stroke="#2f3a3d" stroke-width="1"/>
<path d="M553.2 338.1L529.6 322.2" stroke="#ff80ff" stroke-width="1.8" fill="none"/>
<path d="M518.7 314.8L533 316.4L525.4 327.8Z" fill="#ff80ff"/>
<path d="M628.9 391.3L652.2 310.4" stroke="#1fe81f" stroke-width="3.6" fill="none"/>
<path d="M652.2 310.4L658.5 278.6" stroke="#22cc22" stroke-width="1.4" fill="none"/>
<path d="M653.5 308L655.8 296" stroke="#22cc22" stroke-width="2.2" fill="none"/>
<path d="M646.5 309.2L661.6 313.4" stroke="#1fe01f" stroke-width="2" fill="none"/>
<circle cx="622.4" cy="307.5" r="0.9" fill="#1fe01f"/>
<path d="M593.3 466.5L598.8 468.3L598.8 470.2L595.6 469L594.2 471L593.1 470.6Z" fill="#1fd81f"/>
<text x="64.2" y="658.9" font-family="Liberation Sans, sans-serif" font-size="18" fill="#0000ff" stroke="#0000ff" stroke-width="0.5">Z</text>
<path d="M65.1 656L65.1 635" stroke="#00ff00" stroke-width="2" fill="none"/>
<path d="M65.1 626.4L69.3 635.7L60.9 635.7Z" fill="#00ff00"/>
<path d="M69 659.4L89 659.4" stroke="#c00c0c" stroke-width="1.8" fill="none"/>
<path d="M97.8 659.4L88.3 654.8L88.3 664Z" fill="#ff0000"/>
<path d="M60.7 654.7L68.6 654.7L70.9 660.2L64.9 665.9L59.2 660.2Z" fill="#0000ff"/>
<text x="68" y="615.6" text-anchor="middle" font-family="Liberation Sans, sans-serif" font-size="9.6" fill="#0fd80f" stroke="#0fd80f" stroke-width="0.45">Y</text>
<text x="111.2" y="659.6" text-anchor="middle" font-family="Liberation Sans, sans-serif" font-size="9.6" fill="#f80f0f" stroke="#f80f0f" stroke-width="0.45">X</text>
</svg>
<svg id="logo" width="48" height="48" viewBox="0 0 48 48">
<defs><clipPath id="lc"><rect x="0" y="0" width="47.7" height="47.6"/></clipPath></defs>
<g clip-path="url(#lc)">
<rect x="0" y="0" width="48" height="48" fill="#fde6d2"/>
<circle cx="-7.8" cy="55" r="58.4" fill="#06a3dc"/>
<circle cx="0" cy="47.5" r="27.5" fill="#fdbf1c"/>
<circle cx="0" cy="47.5" r="18.4" fill="#f1eef3"/>
<circle cx="0" cy="47.5" r="10.5" fill="#2aa338"/>
<circle cx="0" cy="47.5" r="5.5" fill="#7cc242"/>
<g fill="none" stroke="#f0522a" stroke-width="0.85" stroke-linecap="round">
<path d="M0.3 47.2C12 30 30 22 42.7 8.3"/>
<path d="M0.3 47.2C10 33 18 32 25.5 30.3C33 28 39 24.5 43 20"/>
<path d="M0.3 47.2C8 36 16 38 25.5 36.8C33 36 39 33.5 41 28.2"/>
<path d="M0.3 47.2C6 40 12 41 18.6 41.7C26 42.6 34.5 45 37.9 38.9"/>
<path d="M0.3 47.2C10 34 22 26 33 17"/>
<path d="M0.3 47.2C6 39 14 36 22 31"/>
</g>
<text x="3.6" y="16.5" font-family="Liberation Sans, sans-serif" font-size="14.4" textLength="29.6" lengthAdjust="spacingAndGlyphs" fill="#142e74" stroke="#06a3dc" stroke-width="0.15">CMS</text>
<text transform="translate(46 30) rotate(-90)" font-family="Liberation Sans, sans-serif" font-size="2.2" fill="#3a5a9a">Compact Muon Solenoid</text>
</g>
</svg>

<div id="info">CMS Experiment at the LHC, CERN<br>Data recorded: 2016-Aug-31 10:11:20.339456 GMT<br>Run / Event / LS: 279823 / 48829252 / 88</div>
<div id="footer"><span>Click on a name under "Provenance", "Tracking", "ECAL", "HCAL", "Muon", and "Physics" to view contents in table</span></div>
<div id="line3"></div>
</body>
</html>
